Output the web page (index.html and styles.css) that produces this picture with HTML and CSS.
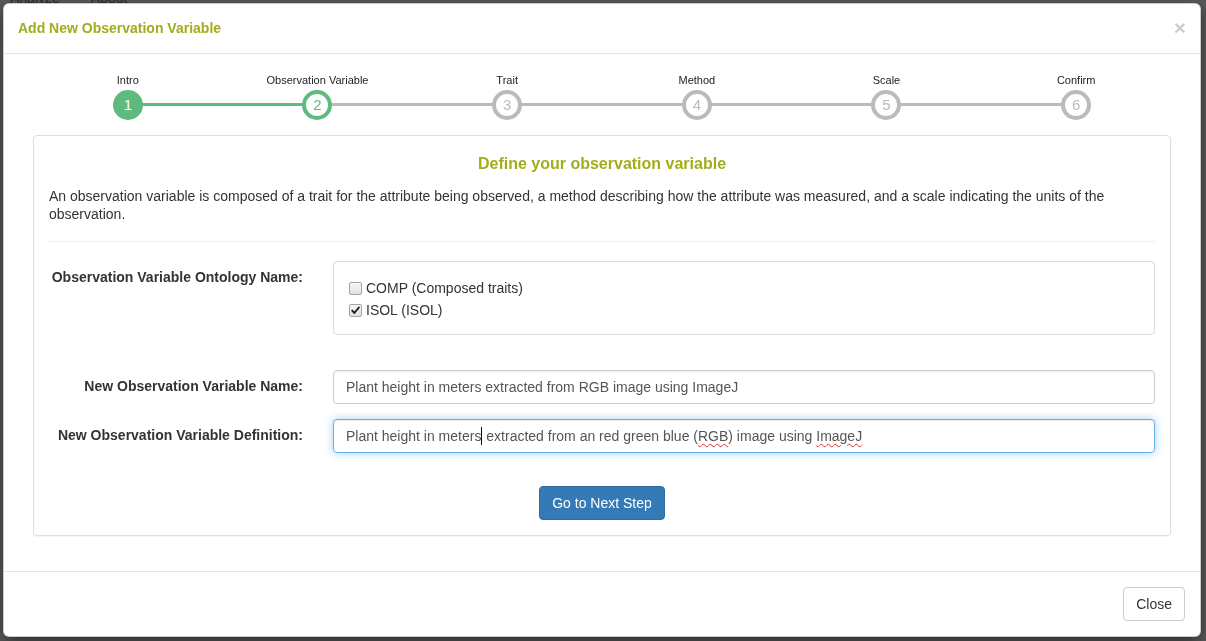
FILE: index.html
```html
<!DOCTYPE html>
<html>
<head>
<meta charset="utf-8">
<link rel="stylesheet" href="styles.css">
</head>
<body>
<div class="page-behind"><span>Analyze</span><span>About</span></div>
<div class="modal">
  <div class="modal-header">
    <h4 class="modal-title">Add New Observation Variable</h4>
    <span class="close">&times;</span>
  </div>
  <div class="modal-body">
    <div class="steps">
      <div class="step done"><div class="step-label">Intro</div><div class="step-dot">1</div></div>
      <div class="step active"><div class="step-label">Observation Variable</div><div class="step-dot">2</div></div>
      <div class="step"><div class="step-label">Trait</div><div class="step-dot">3</div></div>
      <div class="step"><div class="step-label">Method</div><div class="step-dot">4</div></div>
      <div class="step"><div class="step-label">Scale</div><div class="step-dot">5</div></div>
      <div class="step"><div class="step-label">Confirm</div><div class="step-dot">6</div></div>
    </div>
    <div class="panel">
      <h4 class="panel-title">Define your observation variable</h4>
      <p class="intro">An observation variable is composed of a trait for the attribute being observed, a method describing how the attribute was measured, and a scale indicating the units of the observation.</p>
      <hr class="divider">
      <div class="form-row first">
        <label class="form-label">Observation Variable Ontology Name:</label>
        <div class="form-control-col">
          <div class="well">
            <div class="check"><span class="cb"></span>COMP (Composed traits)</div>
            <div class="check"><span class="cb checked"><svg viewBox="0 0 11 11" width="11" height="11"><path d="M2.2 5.6 L4.4 8 L8.9 2.4" fill="none" stroke="#222" stroke-width="1.9" stroke-linecap="round" stroke-linejoin="round"/></svg></span>ISOL (ISOL)</div>
          </div>
        </div>
      </div>
      <div class="form-row">
        <label class="form-label input-label">New Observation Variable Name:</label>
        <div class="form-control-col">
          <div class="form-control">Plant height in meters extracted from RGB image using ImageJ</div>
        </div>
      </div>
      <div class="form-row">
        <label class="form-label input-label">New Observation Variable Definition:</label>
        <div class="form-control-col">
          <div class="form-control focus">Plant height in meters<span class="caret"></span> extracted from an red green blue (<span class="spell">RGB</span>) image using <span class="spell">ImageJ</span></div>
        </div>
      </div>
      <div class="actions">
        <button class="btn btn-primary">Go to Next Step</button>
      </div>
    </div>
  </div>
  <div class="modal-footer">
    <button class="btn btn-default">Close</button>
  </div>
</div>
</body>
</html>
```
FILE: styles.css
```css
* { box-sizing: border-box; }
html, body { margin: 0; padding: 0; }
body {
  width: 1206px;
  height: 641px;
  overflow: hidden;
  background: #5a5a5a;
  font-family: "Liberation Sans", Arial, sans-serif;
  font-size: 14px;
  line-height: 20px;
  color: #333;
}
.page-behind {
  margin-top: -12px;
  padding-left: 10px;
  display: flex;
  gap: 31px;
  color: #2c2c2c;
  font-size: 14px;
  line-height: 20px;
}
.modal {
  position: fixed;
  top: 3px;
  left: 3px;
  width: 1198px;
  height: 634px;
  background: #fff;
  border: 1px solid rgba(0,0,0,.2);
  border-radius: 6px;
  box-shadow: 0 5px 15px rgba(0,0,0,.5);
  display: flex;
  flex-direction: column;
}
.modal-header {
  padding: 14px 15px 15px 14px;
  border-bottom: 1px solid #e5e5e5;
  display: flex;
  justify-content: space-between;
  align-items: center;
}
.modal-title {
  margin: 0;
  font-size: 14px;
  line-height: 20px;
  font-weight: bold;
  color: #a0ad1c;
}
.close {
  font-size: 21px;
  font-weight: bold;
  line-height: 20px;
  color: #000;
  opacity: .2;
  margin-right: -1px;
  margin-top: -1px;
}
.modal-body {
  padding: 17px 15px 15px;
  flex: 1;
}
.steps {
  display: grid;
  grid-template-columns: repeat(6, 1fr);
  margin: 0 14px;
}
.step {
  position: relative;
  display: flex;
  flex-direction: column;
  align-items: center;
}
.step + .step::before {
  content: "";
  position: absolute;
  top: 32px;
  right: 50%;
  width: 100%;
  height: 3px;
  background: #bbb;
}
.step.active::before { background: #5fba7d; }
.step-label {
  margin-top: 0;
  font-size: 11px;
  line-height: 19px;
  color: #222;
  white-space: nowrap;
}
.step-dot {
  position: relative;
  z-index: 1;
  width: 30px;
  height: 30px;
  border-radius: 50%;
  border: 4px solid #bbb;
  background: #fff;
  color: #bbb;
  font-size: 15px;
  line-height: 22px;
  text-align: center;
}
.step.done .step-dot {
  background: #5fba7d;
  border-color: #5fba7d;
  color: #fff;
}
.step.active .step-dot {
  border-color: #5fba7d;
  color: #5fba7d;
}
.panel {
  margin: 15px 14px 20px;
  border: 1px solid #ddd;
  border-radius: 4px;
  padding: 15px;
  box-shadow: 0 1px 1px rgba(0,0,0,.05);
}
.panel-title {
  margin: 2px 0 12px;
  text-align: center;
  font-size: 16px;
  line-height: 22px;
  font-weight: bold;
  color: #a0ad1c;
}
.intro {
  margin: 0;
  line-height: 18px;
}
.divider {
  margin: 18px 0 19px;
  border: 0;
  border-top: 1px solid #eee;
  height: 0;
}
.form-row {
  display: grid;
  grid-template-columns: 284px 1fr;
  margin: 0 -15px 15px;
}
.form-row.first { margin-bottom: 35px; }
.form-label {
  padding: 6px 15px 0;
  text-align: right;
  font-weight: bold;
}
.form-label.input-label { padding-top: 6px; }
.form-control-col { padding: 0 15px; }
.well {
  border: 1px solid #ddd;
  border-radius: 4px;
  padding: 15px 15px 13px;
  box-shadow: inset 0 1px 1px rgba(0,0,0,.03);
}
.check {
  display: flex;
  align-items: center;
  line-height: 22px;
  color: #333;
}
.cb {
  width: 13px;
  height: 13px;
  margin-right: 4px;
  border: 1px solid #a5a5a5;
  border-radius: 2px;
  background: linear-gradient(#f7f7f7, #e2e2e2);
  display: flex;
  align-items: center;
  justify-content: center;
}
.form-control {
  height: 34px;
  padding: 6px 12px;
  border: 1px solid #ccc;
  border-radius: 4px;
  box-shadow: inset 0 1px 1px rgba(0,0,0,.075);
  color: #555;
  line-height: 20px;
  white-space: nowrap;
}
.form-control.focus {
  border-color: #66afe9;
  box-shadow: inset 0 1px 1px rgba(0,0,0,.075), 0 0 8px rgba(102,175,233,.6);
}
.caret {
  display: inline-block;
  width: 1px;
  height: 18px;
  background: #111;
  vertical-align: -4px;
}
.spell {
  text-decoration: underline wavy #e03030;
  text-decoration-thickness: 1px;
  text-underline-offset: 2px;
}
.actions {
  display: flex;
  justify-content: center;
  margin-top: 33px;
}
.btn {
  font-family: "Liberation Sans", Arial, sans-serif;
  font-size: 14px;
  line-height: 20px;
  padding: 6px 12px;
  border-radius: 4px;
  border: 1px solid transparent;
  cursor: pointer;
}
.btn-primary {
  background: #337ab7;
  border-color: #2e6da4;
  color: #fff;
}
.btn-default {
  background: #fff;
  border-color: #ccc;
  color: #333;
}
.modal-footer {
  padding: 15px;
  border-top: 1px solid #e5e5e5;
  display: flex;
  justify-content: flex-end;
}
```
